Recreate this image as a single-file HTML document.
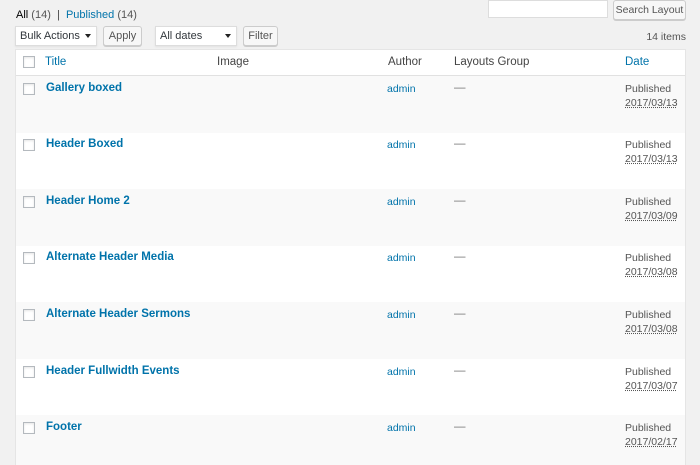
<!DOCTYPE html>
<html style="margin:0;height:465px;overflow:hidden"><head><style>
body{margin:0;width:700px;height:465px;background:#f1f1f1;font-family:"Liberation Sans",sans-serif;font-size:11.5px;color:#444;position:relative;overflow:hidden}
.a{position:absolute;white-space:nowrap}
.blue{color:#0073aa}
.sel{position:absolute;background:#fff;border:1px solid #ddd;box-shadow:0 1px 2px rgba(0,0,0,.07);height:20px;box-sizing:border-box;font-size:11px;color:#32373c;padding:3px 4px}
.sel:after{content:"";position:absolute;right:5px;top:7px;border:3px solid transparent;border-top:4px solid #222}
.btn{position:absolute;background:#f7f7f7;border:1px solid #ccc;border-radius:3px;box-shadow:0 1px 0 #ccc;height:20px;box-sizing:border-box;font-size:11px;color:#555;text-align:center;padding-top:3px}
.tbl{position:absolute;left:15px;top:49px;width:671px;height:420px;background:#fff;border:1px solid #e5e5e5;box-sizing:border-box}
.cb{position:absolute;left:7px;width:12px;height:12px;border:1px solid #b4b9be;background:#fff;box-sizing:border-box;box-shadow:inset 0 1px 2px rgba(0,0,0,.1)}
.row{position:absolute;left:0;width:669px;height:57px}
.row .t{position:absolute;left:30px;top:6px;font-weight:bold;color:#0073aa;font-size:11.5px}
.row .au{position:absolute;left:371px;top:7px;color:#0073aa;font-size:10.5px}
.row .d{position:absolute;left:438px;top:6px;color:#777}
.row .p{position:absolute;left:609px;top:6px;font-size:10.5px;color:#555;line-height:14px}
.row .p u{text-decoration:underline dotted}
</style></head><body>
<div class="a" style="left:16px;top:9px;font-size:11px"><span style="color:#000">All</span> <span style="color:#555">(14)</span> &nbsp;|&nbsp; <span class="blue">Published</span> <span style="color:#555">(14)</span></div>
<div class="a" style="left:488px;top:0;width:120px;height:18px;background:#fff;border:1px solid #ddd;box-sizing:border-box"></div>
<div class="btn" style="left:613px;top:0;width:73px;font-size:10.5px">Search Layout</div>
<div class="sel" style="left:15px;top:26px;width:82px">Bulk Actions</div>
<div class="btn" style="left:103px;top:26px;width:39px">Apply</div>
<div class="sel" style="left:155px;top:26px;width:82px">All dates</div>
<div class="btn" style="left:243px;top:26px;width:35px">Filter</div>
<div class="a" style="right:14px;top:31px;font-size:10.5px;color:#555">14 items</div>
<div class="tbl">
 <div style="position:absolute;left:0;top:0;width:669px;height:25px;border-bottom:1px solid #e1e1e1">
  <div class="cb" style="top:6px"></div>
  <div class="a blue" style="left:29px;top:6px">Title</div>
  <div class="a" style="left:201px;top:6px">Image</div>
  <div class="a" style="left:372px;top:6px">Author</div>
  <div class="a" style="left:438px;top:6px">Layouts Group</div>
  <div class="a blue" style="left:609px;top:6px">Date</div>
 </div>
 <div class="row" style="top:26px;background:#f9f9f9"><div class="cb" style="top:7px"></div><div class="t">Gallery boxed</div><div class="au">admin</div><div class="d">—</div><div class="p">Published<br><u>2017/03/13</u></div></div>
 <div class="row" style="top:82px"><div class="cb" style="top:7px"></div><div class="t">Header Boxed</div><div class="au">admin</div><div class="d">—</div><div class="p">Published<br><u>2017/03/13</u></div></div>
 <div class="row" style="top:139px;background:#f9f9f9"><div class="cb" style="top:7px"></div><div class="t">Header Home 2</div><div class="au">admin</div><div class="d">—</div><div class="p">Published<br><u>2017/03/09</u></div></div>
 <div class="row" style="top:195px"><div class="cb" style="top:7px"></div><div class="t">Alternate Header Media</div><div class="au">admin</div><div class="d">—</div><div class="p">Published<br><u>2017/03/08</u></div></div>
 <div class="row" style="top:252px;background:#f9f9f9"><div class="cb" style="top:7px"></div><div class="t">Alternate Header Sermons</div><div class="au">admin</div><div class="d">—</div><div class="p">Published<br><u>2017/03/08</u></div></div>
 <div class="row" style="top:309px"><div class="cb" style="top:7px"></div><div class="t">Header Fullwidth Events</div><div class="au">admin</div><div class="d">—</div><div class="p">Published<br><u>2017/03/07</u></div></div>
 <div class="row" style="top:365px;background:#f9f9f9;height:60px"><div class="cb" style="top:7px"></div><div class="t">Footer</div><div class="au">admin</div><div class="d">—</div><div class="p">Published<br><u>2017/02/17</u></div></div>
</div>
</body></html>
